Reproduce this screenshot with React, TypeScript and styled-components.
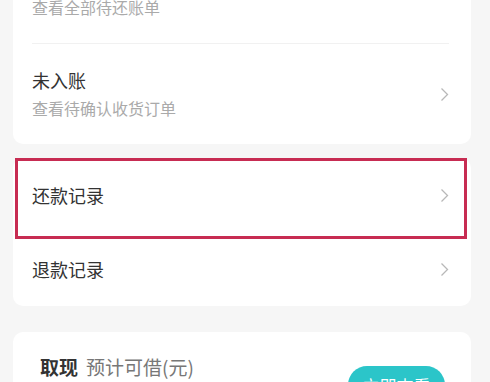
import React from "react";
import styled, { createGlobalStyle } from "styled-components";

const GlobalStyle = createGlobalStyle`
  html, body {
    margin: 0;
    padding: 0;
    background: #f6f6f6;
  }
  body {
    width: 490px;
    height: 382px;
    overflow: hidden;
    font-family: "Noto Sans CJK SC", "Noto Sans", sans-serif;
  }
`;

const Page = styled.div`
  display: flex;
  flex-direction: column;
  padding: 0 19px 0 13px;
  margin-top: -57px;
`;

const Card = styled.div<{ $gap?: number }>`
  background: #fff;
  border-radius: 10px;
  margin-bottom: ${(p) => p.$gap ?? 0}px;
  display: flex;
  flex-direction: column;
`;

const Row = styled.div<{ $height: number; $divider?: boolean }>`
  position: relative;
  height: ${(p) => p.$height}px;
  display: flex;
  align-items: center;
  justify-content: space-between;
  padding: 0 22px 0 19px;
  border-bottom: ${(p) => (p.$divider ? "1px solid #f1f1f1" : "none")};
  background-clip: padding-box;
`;

const Divider = styled.div`
  height: 1px;
  background: #f1f1f1;
  margin: 0 22px 0 19px;
`;

const Texts = styled.div`
  display: flex;
  flex-direction: column;
`;

const Title = styled.div`
  font-size: 18px;
  line-height: 28px;
  color: #333;
`;

const Sub = styled.div`
  font-size: 16px;
  line-height: 28px;
  color: #aaa;
`;

const Highlight = styled.div`
  position: absolute;
  left: 2px;
  right: 4px;
  top: 0;
  height: 81px;
  border: 3px solid #c72c52;
  box-sizing: border-box;
  pointer-events: none;
`;

const Chevron = () => (
  <svg width="9" height="15" viewBox="0 0 9 15">
    <polyline
      points="1.5,1.5 7.5,7.5 1.5,13.5"
      fill="none"
      stroke="#b8b8b8"
      strokeWidth="1.3"
    />
  </svg>
);

const CashCard = styled(Card)`
  flex-direction: row;
  justify-content: space-between;
  align-items: flex-start;
  padding: 21px 26px 0 27px;
  height: 120px;
`;

const CashTitle = styled.div`
  display: flex;
  align-items: baseline;
  gap: 8px;
  font-size: 19px;
  line-height: 28px;
`;

const Strong = styled.span`
  font-weight: 700;
  color: #333;
`;

const Muted = styled.span`
  color: #777;
`;

const Button = styled.div`
  margin-top: 13px;
  width: 97px;
  height: 38px;
  border-radius: 19px;
  background: #2bc5c9;
  color: #fff;
  font-size: 17px;
  display: flex;
  align-items: center;
  justify-content: center;
`;

export default function App() {
  return (
    <>
      <GlobalStyle />
      <Page>
        <Card $gap={14}>
          <Row $height={100}>
            <Texts>
              <Title>待还款</Title>
              <Sub>查看全部待还账单</Sub>
            </Texts>
            <Chevron />
          </Row>
          <Divider />
          <Row $height={100}>
            <Texts>
              <Title>未入账</Title>
              <Sub>查看待确认收货订单</Sub>
            </Texts>
            <Chevron />
          </Row>
        </Card>
        <Card $gap={26}>
          <Row $height={74}>
            <Title>还款记录</Title>
            <Chevron />
            <Highlight />
          </Row>
          <Row $height={74}>
            <Title>退款记录</Title>
            <Chevron />
          </Row>
        </Card>
        <CashCard>
          <CashTitle>
            <Strong>取现</Strong>
            <Muted>预计可借(元)</Muted>
          </CashTitle>
          <Button>立即查看</Button>
        </CashCard>
      </Page>
    </>
  );
}
